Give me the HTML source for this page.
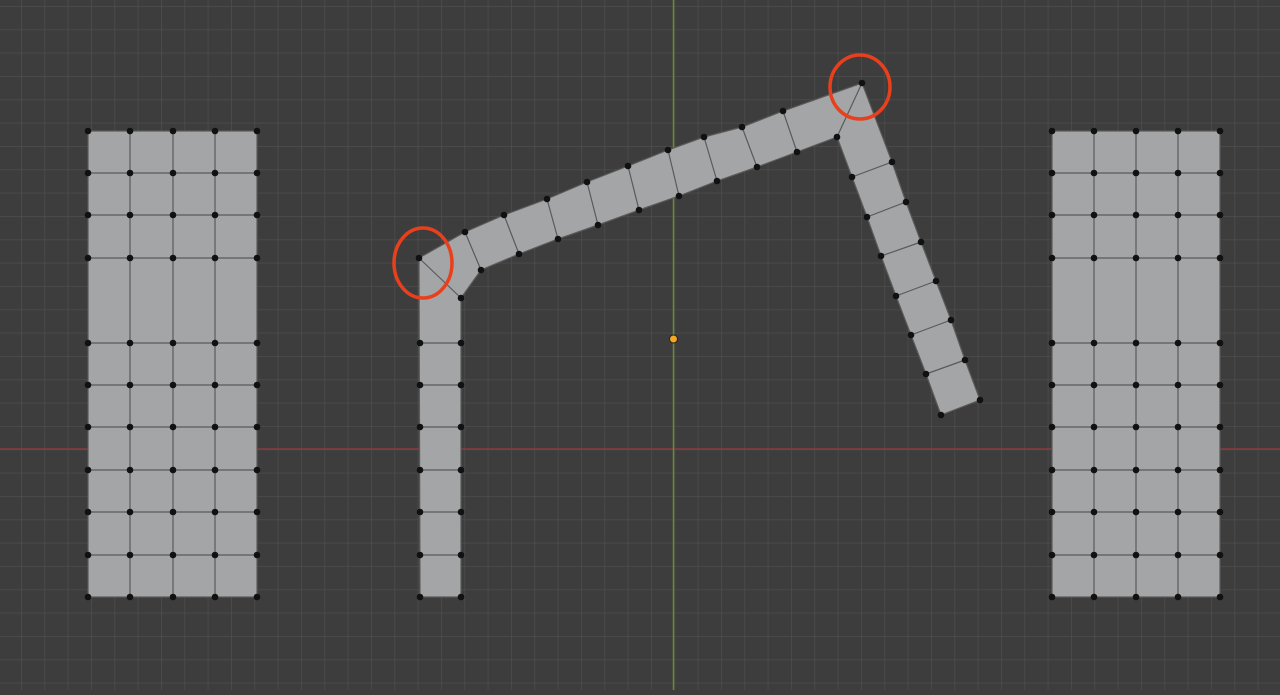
<!DOCTYPE html>
<html><head><style>html,body{margin:0;padding:0;background:#3d3d3d;overflow:hidden}</style></head>
<body>
<svg width="1280" height="690" viewBox="0 0 1280 690" xmlns="http://www.w3.org/2000/svg">
<defs>
<pattern id="g" x="21" y="6" width="23.333" height="23.333" patternUnits="userSpaceOnUse">
<rect x="-0.75" y="0" width="1.5" height="23.333" fill="#4d4d4d"/>
<rect x="0" y="-0.75" width="23.333" height="1.5" fill="#4d4d4d"/>
</pattern>
</defs>
<rect width="1280" height="690" fill="#3d3d3d"/>
<rect width="1280" height="690" fill="url(#g)"/>
<line x1="0" y1="449" x2="1280" y2="449" stroke="#8a3a40" stroke-width="1.5"/>
<line x1="673.5" y1="0" x2="673.5" y2="690" stroke="#6d8a2a" stroke-width="1.5"/>

<g fill="#a4a5a6" stroke="#5a5a5a" stroke-width="1.2">
<rect x="88" y="131" width="169" height="466"/>
<rect x="1052" y="131" width="168" height="466"/>
<polygon points="420,597 461,597 461,298 481,270 519,254 558,239 598,225 639,210 679,196 717,181 757,167 797,152 837,137 852,177 867,217 881,256 896,296 911,335 926,374 941,415 980,400 965,360 951,320 936,281 921,242 906,202 892,162 862,83 783,111 742,127 704,137 668,150 628,166 587,182 547,199 504,215 465,232 419,258"/>
</g>
<g stroke="#5a5a5a" stroke-width="1.2">
<line x1="130" y1="131" x2="130" y2="597"/><line x1="173" y1="131" x2="173" y2="597"/><line x1="215" y1="131" x2="215" y2="597"/>
<line x1="1094" y1="131" x2="1094" y2="597"/><line x1="1136" y1="131" x2="1136" y2="597"/><line x1="1178" y1="131" x2="1178" y2="597"/>
<path d="M88 173H257M88 215H257M88 258H257M88 343H257M88 385H257M88 427H257M88 470H257M88 512H257M88 555H257"/>
<path d="M1052 173H1220M1052 215H1220M1052 258H1220M1052 343H1220M1052 385H1220M1052 427H1220M1052 470H1220M1052 512H1220M1052 555H1220"/>
<path d="M420 343H461M420 385H461M420 427H461M420 470H461M420 512H461M420 555H461"/>
<path d="M419 258L461 298M465 232L481 270M504 215L519 254M547 199L558 239M587 182L598 225M628 166L639 210M668 150L679 196M704 137L717 181M742 127L757 167M783 111L797 152M862 83L837 137"/>
<path d="M892 162L852 177M906 202L867 217M921 242L881 256M936 281L896 296M951 320L911 335M965 360L926 374"/>
</g>
<g fill="#111">
<g id="lb">
<circle cx="88" cy="131" r="3.3"/><circle cx="130" cy="131" r="3.3"/><circle cx="173" cy="131" r="3.3"/><circle cx="215" cy="131" r="3.3"/><circle cx="257" cy="131" r="3.3"/>
</g>
<use href="#lb" y="42"/><use href="#lb" y="84"/><use href="#lb" y="127"/><use href="#lb" y="212"/><use href="#lb" y="254"/><use href="#lb" y="296"/><use href="#lb" y="339"/><use href="#lb" y="381"/><use href="#lb" y="424"/><use href="#lb" y="466"/>
<g id="rb">
<circle cx="1052" cy="131" r="3.3"/><circle cx="1094" cy="131" r="3.3"/><circle cx="1136" cy="131" r="3.3"/><circle cx="1178" cy="131" r="3.3"/><circle cx="1220" cy="131" r="3.3"/>
</g>
<use href="#rb" y="42"/><use href="#rb" y="84"/><use href="#rb" y="127"/><use href="#rb" y="212"/><use href="#rb" y="254"/><use href="#rb" y="296"/><use href="#rb" y="339"/><use href="#rb" y="381"/><use href="#rb" y="424"/><use href="#rb" y="466"/>
<g id="vs"><circle cx="420" cy="343" r="3.3"/><circle cx="461" cy="343" r="3.3"/></g>
<use href="#vs" y="42"/><use href="#vs" y="84"/><use href="#vs" y="127"/><use href="#vs" y="169"/><use href="#vs" y="212"/><use href="#vs" y="254"/>
<circle cx="419" cy="258" r="3.3"/><circle cx="461" cy="298" r="3.3"/>
<circle cx="465" cy="232" r="3.3"/><circle cx="481" cy="270" r="3.3"/>
<circle cx="504" cy="215" r="3.3"/><circle cx="519" cy="254" r="3.3"/>
<circle cx="547" cy="199" r="3.3"/><circle cx="558" cy="239" r="3.3"/>
<circle cx="587" cy="182" r="3.3"/><circle cx="598" cy="225" r="3.3"/>
<circle cx="628" cy="166" r="3.3"/><circle cx="639" cy="210" r="3.3"/>
<circle cx="668" cy="150" r="3.3"/><circle cx="679" cy="196" r="3.3"/>
<circle cx="704" cy="137" r="3.3"/><circle cx="717" cy="181" r="3.3"/>
<circle cx="742" cy="127" r="3.3"/><circle cx="757" cy="167" r="3.3"/>
<circle cx="783" cy="111" r="3.3"/><circle cx="797" cy="152" r="3.3"/>
<circle cx="862" cy="83" r="3.3"/><circle cx="837" cy="137" r="3.3"/>
<circle cx="892" cy="162" r="3.3"/><circle cx="852" cy="177" r="3.3"/>
<circle cx="906" cy="202" r="3.3"/><circle cx="867" cy="217" r="3.3"/>
<circle cx="921" cy="242" r="3.3"/><circle cx="881" cy="256" r="3.3"/>
<circle cx="936" cy="281" r="3.3"/><circle cx="896" cy="296" r="3.3"/>
<circle cx="951" cy="320" r="3.3"/><circle cx="911" cy="335" r="3.3"/>
<circle cx="965" cy="360" r="3.3"/><circle cx="926" cy="374" r="3.3"/>
<circle cx="980" cy="400" r="3.3"/><circle cx="941" cy="415" r="3.3"/>
</g>
<circle cx="673.5" cy="339" r="4" fill="#f5a623" stroke="#222" stroke-width="1"/>
<ellipse cx="423" cy="263" rx="29" ry="35" fill="none" stroke="#e8401c" stroke-width="3.5"/>
<ellipse cx="860" cy="87" rx="30" ry="32" fill="none" stroke="#e8401c" stroke-width="3.5"/>
</svg>
</body></html>
